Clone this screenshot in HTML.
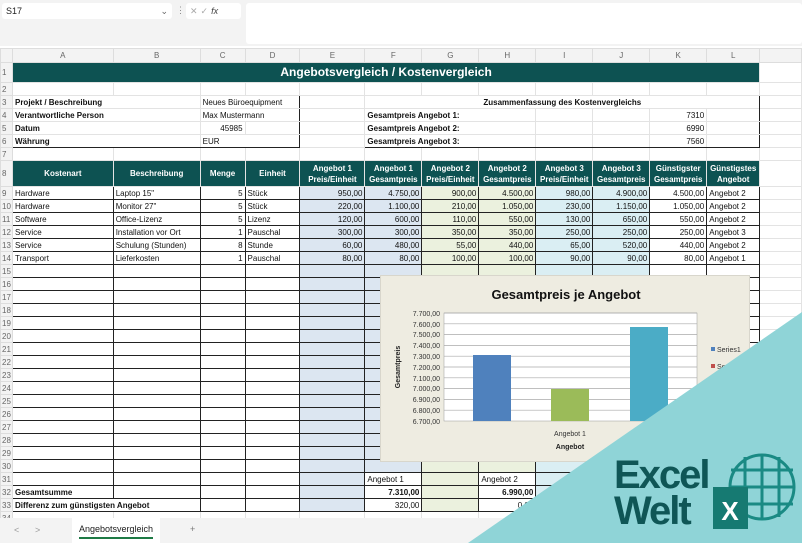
<!DOCTYPE html>
<html><head><meta charset="utf-8"><style>
*{margin:0;padding:0;box-sizing:border-box}
body{width:802px;height:543px;overflow:hidden;background:#fff;font-family:"Liberation Sans",sans-serif;position:relative}
.fb{position:absolute;left:0;top:0;width:802px;height:46px;background:#f3f3f3}
.nb{position:absolute;left:2px;top:3px;width:170px;height:16px;background:#fff;border-radius:3px;font-size:9px;padding:3px 4px;color:#222}
.fx{position:absolute;left:186px;top:3px;width:55px;height:16px;background:#fff;border-radius:3px;font-size:9px;color:#aaa;padding:3px 4px;letter-spacing:3px}
.fi{position:absolute;left:246px;top:3px;width:556px;height:41px;background:#fff;border-radius:3px}
table{position:absolute;left:0;top:48px;border-collapse:collapse;table-layout:fixed;font-size:8px;color:#111}
td{height:13px;border:1px solid #e3e3e3;white-space:nowrap;overflow:hidden;padding:0 2px;line-height:11px}
tr.ch td{height:14px;background:#f3f3f3;color:#666;text-align:center;border-color:#ddd}
td.rh{background:#f3f3f3;color:#666;text-align:left;padding:0 1px;font-size:8px;border-color:#ddd}
.t{background:#0d5252;color:#fff;font-weight:bold;text-align:center}
.r{text-align:right}.b{font-weight:bold}
.k td.x{border:1px solid #222}
.e{background:#dce6f1}.g{background:#ebf1de}.i{background:#daeef3}
.chart{position:absolute;left:380px;top:275px;width:370px;height:187px;background:#eeece1;border:1px solid #d8d6cc}
.tri{position:absolute;left:0;top:0;width:802px;height:543px}
.tabs{position:absolute;left:0;top:518px;width:802px;height:25px;background:#f3f3f3;font-size:9px;color:#999}
</style></head><body>
<div class="fb"><div class="nb">S17<span style="float:right;color:#666">⌄</span></div><span style="position:absolute;left:176px;top:5px;font-size:9px;color:#888">⋮</span><div class="fx">✕✓<i style="color:#444;letter-spacing:0">fx</i></div><div class="fi"></div></div>
<table>
<colgroup><col style="width:12px"><col style="width:101px"><col style="width:87px"><col style="width:45px"><col style="width:55px"><col style="width:65px"><col style="width:57px"><col style="width:57px"><col style="width:57px"><col style="width:57px"><col style="width:57px"><col style="width:57px"><col style="width:53px"><col style="width:42px"></colgroup>
<tr class="ch"><td></td><td>A</td><td>B</td><td>C</td><td>D</td><td>E</td><td>F</td><td>G</td><td>H</td><td>I</td><td>J</td><td>K</td><td>L</td><td></td></tr>
<tr><td class="rh" style="height:20px">1</td><td colspan="12" class="t" style="font-size:12px;height:20px">Angebotsvergleich / Kostenvergleich</td><td></td></tr>
<tr><td class="rh">2</td><td></td><td></td><td></td><td></td><td></td><td></td><td></td><td></td><td></td><td></td><td></td><td></td><td></td></tr>
<tr><td class="rh">3</td><td class="b" colspan="2" style="border-left:1px solid #222;border-top:1px solid #222">Projekt / Beschreibung</td><td colspan="2" style="border-top:1px solid #222;border-right:1px solid #222">Neues Büroequipment</td><td></td><td colspan="7" class="b" style="text-align:center;border:1px solid #222;border-bottom:none">Zusammenfassung des Kostenvergleichs</td><td></td></tr>
<tr><td class="rh">4</td><td class="b" colspan="2" style="border-left:1px solid #222">Verantwortliche Person</td><td colspan="2" style="border-right:1px solid #222">Max Mustermann</td><td></td><td colspan="3" class="b" style="border-left:1px solid #222">Gesamtpreis Angebot 1:</td><td></td><td></td><td class="r">7310</td><td style="border-right:1px solid #222"></td><td></td></tr>
<tr><td class="rh">5</td><td class="b" colspan="2" style="border-left:1px solid #222">Datum</td><td class="r">45985</td><td style="border-right:1px solid #222"></td><td></td><td colspan="3" class="b" style="border-left:1px solid #222">Gesamtpreis Angebot 2:</td><td></td><td></td><td class="r">6990</td><td style="border-right:1px solid #222"></td><td></td></tr>
<tr><td class="rh">6</td><td class="b" colspan="2" style="border-left:1px solid #222;border-bottom:1px solid #222">Währung</td><td colspan="2" style="border-bottom:1px solid #222;border-right:1px solid #222">EUR</td><td></td><td colspan="3" class="b" style="border-left:1px solid #222;border-bottom:1px solid #222">Gesamtpreis Angebot 3:</td><td style="border-bottom:1px solid #222"></td><td style="border-bottom:1px solid #222"></td><td class="r" style="border-bottom:1px solid #222">7560</td><td style="border-right:1px solid #222;border-bottom:1px solid #222"></td><td></td></tr>
<tr><td class="rh">7</td><td></td><td></td><td></td><td></td><td></td><td></td><td></td><td></td><td></td><td></td><td></td><td></td><td></td></tr>
<tr><td class="rh" style="height:26px">8</td><td class="t">Kostenart</td><td class="t">Beschreibung</td><td class="t">Menge</td><td class="t">Einheit</td><td class="t">Angebot 1<br>Preis/Einheit</td><td class="t">Angebot 1<br>Gesamtpreis</td><td class="t">Angebot 2<br>Preis/Einheit</td><td class="t">Angebot 2<br>Gesamtpreis</td><td class="t">Angebot 3<br>Preis/Einheit</td><td class="t">Angebot 3<br>Gesamtpreis</td><td class="t">Günstigster<br>Gesamtpreis</td><td class="t">Günstigstes<br>Angebot</td><td></td></tr>
<tr class="k"><td class="rh">9</td><td class="x">Hardware</td><td class="x">Laptop 15"</td><td class="x r">5</td><td class="x">Stück</td><td class="x r e">950,00</td><td class="x r e">4.750,00</td><td class="x r g">900,00</td><td class="x r g">4.500,00</td><td class="x r i">980,00</td><td class="x r i">4.900,00</td><td class="x r">4.500,00</td><td class="x">Angebot 2</td><td></td></tr>
<tr class="k"><td class="rh">10</td><td class="x">Hardware</td><td class="x">Monitor 27"</td><td class="x r">5</td><td class="x">Stück</td><td class="x r e">220,00</td><td class="x r e">1.100,00</td><td class="x r g">210,00</td><td class="x r g">1.050,00</td><td class="x r i">230,00</td><td class="x r i">1.150,00</td><td class="x r">1.050,00</td><td class="x">Angebot 2</td><td></td></tr>
<tr class="k"><td class="rh">11</td><td class="x">Software</td><td class="x">Office-Lizenz</td><td class="x r">5</td><td class="x">Lizenz</td><td class="x r e">120,00</td><td class="x r e">600,00</td><td class="x r g">110,00</td><td class="x r g">550,00</td><td class="x r i">130,00</td><td class="x r i">650,00</td><td class="x r">550,00</td><td class="x">Angebot 2</td><td></td></tr>
<tr class="k"><td class="rh">12</td><td class="x">Service</td><td class="x">Installation vor Ort</td><td class="x r">1</td><td class="x">Pauschal</td><td class="x r e">300,00</td><td class="x r e">300,00</td><td class="x r g">350,00</td><td class="x r g">350,00</td><td class="x r i">250,00</td><td class="x r i">250,00</td><td class="x r">250,00</td><td class="x">Angebot 3</td><td></td></tr>
<tr class="k"><td class="rh">13</td><td class="x">Service</td><td class="x">Schulung (Stunden)</td><td class="x r">8</td><td class="x">Stunde</td><td class="x r e">60,00</td><td class="x r e">480,00</td><td class="x r g">55,00</td><td class="x r g">440,00</td><td class="x r i">65,00</td><td class="x r i">520,00</td><td class="x r">440,00</td><td class="x">Angebot 2</td><td></td></tr>
<tr class="k"><td class="rh">14</td><td class="x">Transport</td><td class="x">Lieferkosten</td><td class="x r">1</td><td class="x">Pauschal</td><td class="x r e">80,00</td><td class="x r e">80,00</td><td class="x r g">100,00</td><td class="x r g">100,00</td><td class="x r i">90,00</td><td class="x r i">90,00</td><td class="x r">80,00</td><td class="x">Angebot 1</td><td></td></tr>
<tr class="k"><td class="rh">15</td><td class="x"></td><td class="x"></td><td class="x"></td><td class="x"></td><td class="x e"></td><td class="x e"></td><td class="x g"></td><td class="x g"></td><td class="x i"></td><td class="x i"></td><td class="x"></td><td class="x"></td><td></td></tr>
<tr class="k"><td class="rh">16</td><td class="x"></td><td class="x"></td><td class="x"></td><td class="x"></td><td class="x e"></td><td class="x e"></td><td class="x g"></td><td class="x g"></td><td class="x i"></td><td class="x i"></td><td class="x"></td><td class="x"></td><td></td></tr>
<tr class="k"><td class="rh">17</td><td class="x"></td><td class="x"></td><td class="x"></td><td class="x"></td><td class="x e"></td><td class="x e"></td><td class="x g"></td><td class="x g"></td><td class="x i"></td><td class="x i"></td><td class="x"></td><td class="x"></td><td></td></tr>
<tr class="k"><td class="rh">18</td><td class="x"></td><td class="x"></td><td class="x"></td><td class="x"></td><td class="x e"></td><td class="x e"></td><td class="x g"></td><td class="x g"></td><td class="x i"></td><td class="x i"></td><td class="x"></td><td class="x"></td><td></td></tr>
<tr class="k"><td class="rh">19</td><td class="x"></td><td class="x"></td><td class="x"></td><td class="x"></td><td class="x e"></td><td class="x e"></td><td class="x g"></td><td class="x g"></td><td class="x i"></td><td class="x i"></td><td class="x"></td><td class="x"></td><td></td></tr>
<tr class="k"><td class="rh">20</td><td class="x"></td><td class="x"></td><td class="x"></td><td class="x"></td><td class="x e"></td><td class="x e"></td><td class="x g"></td><td class="x g"></td><td class="x i"></td><td class="x i"></td><td class="x"></td><td class="x"></td><td></td></tr>
<tr class="k"><td class="rh">21</td><td class="x"></td><td class="x"></td><td class="x"></td><td class="x"></td><td class="x e"></td><td class="x e"></td><td class="x g"></td><td class="x g"></td><td class="x i"></td><td class="x i"></td><td class="x"></td><td class="x"></td><td></td></tr>
<tr class="k"><td class="rh">22</td><td class="x"></td><td class="x"></td><td class="x"></td><td class="x"></td><td class="x e"></td><td class="x e"></td><td class="x g"></td><td class="x g"></td><td class="x i"></td><td class="x i"></td><td class="x"></td><td class="x"></td><td></td></tr>
<tr class="k"><td class="rh">23</td><td class="x"></td><td class="x"></td><td class="x"></td><td class="x"></td><td class="x e"></td><td class="x e"></td><td class="x g"></td><td class="x g"></td><td class="x i"></td><td class="x i"></td><td class="x"></td><td class="x"></td><td></td></tr>
<tr class="k"><td class="rh">24</td><td class="x"></td><td class="x"></td><td class="x"></td><td class="x"></td><td class="x e"></td><td class="x e"></td><td class="x g"></td><td class="x g"></td><td class="x i"></td><td class="x i"></td><td class="x"></td><td class="x"></td><td></td></tr>
<tr class="k"><td class="rh">25</td><td class="x"></td><td class="x"></td><td class="x"></td><td class="x"></td><td class="x e"></td><td class="x e"></td><td class="x g"></td><td class="x g"></td><td class="x i"></td><td class="x i"></td><td class="x"></td><td class="x"></td><td></td></tr>
<tr class="k"><td class="rh">26</td><td class="x"></td><td class="x"></td><td class="x"></td><td class="x"></td><td class="x e"></td><td class="x e"></td><td class="x g"></td><td class="x g"></td><td class="x i"></td><td class="x i"></td><td class="x"></td><td class="x"></td><td></td></tr>
<tr class="k"><td class="rh">27</td><td class="x"></td><td class="x"></td><td class="x"></td><td class="x"></td><td class="x e"></td><td class="x e"></td><td class="x g"></td><td class="x g"></td><td class="x i"></td><td class="x i"></td><td class="x"></td><td class="x"></td><td></td></tr>
<tr class="k"><td class="rh">28</td><td class="x"></td><td class="x"></td><td class="x"></td><td class="x"></td><td class="x e"></td><td class="x e"></td><td class="x g"></td><td class="x g"></td><td class="x i"></td><td class="x i"></td><td class="x"></td><td class="x"></td><td></td></tr>
<tr class="k"><td class="rh">29</td><td class="x"></td><td class="x"></td><td class="x"></td><td class="x"></td><td class="x e"></td><td class="x e"></td><td class="x g"></td><td class="x g"></td><td class="x i"></td><td class="x i"></td><td class="x"></td><td class="x"></td><td></td></tr>
<tr class="k"><td class="rh">30</td><td class="x"></td><td class="x"></td><td class="x"></td><td class="x"></td><td class="x e"></td><td class="x e"></td><td class="x g"></td><td class="x g"></td><td class="x i"></td><td class="x i"></td><td class="x"></td><td class="x"></td><td></td></tr>
<tr class="k"><td class="rh">31</td><td class="x"></td><td class="x"></td><td class="x"></td><td class="x"></td><td class="x e"></td><td class="x">Angebot 1</td><td class="x g"></td><td class="x">Angebot 2</td><td class="x i"></td><td class="x"></td><td class="x"></td><td class="x"></td><td></td></tr>
<tr class="k"><td class="rh">32</td><td class="x b">Gesamtsumme</td><td class="x"></td><td class="x"></td><td class="x"></td><td class="x e"></td><td class="x r b">7.310,00</td><td class="x g"></td><td class="x r b">6.990,00</td><td class="x i"></td><td class="x"></td><td class="x"></td><td class="x"></td><td></td></tr>
<tr class="k"><td class="rh">33</td><td class="x b" colspan="2">Differenz zum günstigsten Angebot</td><td class="x"></td><td class="x"></td><td class="x e"></td><td class="x r">320,00</td><td class="x g"></td><td class="x r">0,00</td><td class="x i"></td><td class="x"></td><td class="x"></td><td class="x"></td><td></td></tr>
<tr><td class="rh">34</td><td></td><td></td><td></td><td></td><td></td><td></td><td></td><td></td><td></td><td></td><td></td><td></td><td></td></tr>
</table>
<div class="chart">
<svg width="370" height="187" style="position:absolute;left:0;top:0" font-family="Liberation Sans, sans-serif">
<text x="185" y="23" text-anchor="middle" font-size="13" font-weight="bold" fill="#111">Gesamtpreis je Angebot</text>
<rect x="63" y="37" width="253" height="108" fill="#fff" stroke="#999" stroke-width="0.5"/>
<g stroke="#aaa" stroke-width="0.7">
<line x1="63" x2="316" y1="37" y2="37"/><line x1="63" x2="316" y1="47.8" y2="47.8"/><line x1="63" x2="316" y1="58.6" y2="58.6"/><line x1="63" x2="316" y1="69.4" y2="69.4"/><line x1="63" x2="316" y1="80.2" y2="80.2"/><line x1="63" x2="316" y1="91" y2="91"/><line x1="63" x2="316" y1="101.8" y2="101.8"/><line x1="63" x2="316" y1="112.6" y2="112.6"/><line x1="63" x2="316" y1="123.4" y2="123.4"/><line x1="63" x2="316" y1="134.2" y2="134.2"/></g>
<g font-size="7" fill="#333" text-anchor="end">
<text x="59" y="40">7.700,00</text><text x="59" y="51">7.600,00</text><text x="59" y="61">7.500,00</text><text x="59" y="72">7.400,00</text><text x="59" y="83">7.300,00</text><text x="59" y="94">7.200,00</text><text x="59" y="105">7.100,00</text><text x="59" y="115">7.000,00</text><text x="59" y="126">6.900,00</text><text x="59" y="137">6.800,00</text><text x="59" y="148">6.700,00</text></g>
<text transform="translate(19,91) rotate(-90)" text-anchor="middle" font-size="7" font-weight="bold" fill="#222">Gesamtpreis</text>
<rect x="92" y="79" width="38" height="66" fill="#4f81bd"/>
<rect x="170" y="113" width="38" height="32" fill="#9bbb59"/>
<rect x="249" y="51" width="38" height="94" fill="#4bacc6"/>
<text x="189" y="160" text-anchor="middle" font-size="7" fill="#333">Angebot 1</text>
<text x="189" y="173" text-anchor="middle" font-size="7" font-weight="bold" fill="#222">Angebot</text>
<rect x="330" y="71" width="4" height="4" fill="#4f81bd"/><text x="336" y="76" font-size="7" fill="#333">Series1</text>
<rect x="330" y="88" width="4" height="4" fill="#c0504d"/><text x="336" y="93" font-size="7" fill="#333">Series2</text>
</svg></div>
<div class="tabs">
<span style="position:absolute;left:14px;top:7px">&lt;</span><span style="position:absolute;left:35px;top:7px">&gt;</span>
<div style="position:absolute;left:72px;top:0;width:88px;height:25px;background:#fff;color:#222;text-align:center;padding-top:6px">Angebotsvergleich<div style="width:74px;height:2px;background:#1e7a45;margin:3px auto 0"></div></div>
<span style="position:absolute;left:190px;top:6px;color:#777">+</span></div>
<svg class="tri" viewBox="0 0 802 543">
<polygon points="802,312 802,543 468,543" fill="#8fd4d7"/>
<g fill="none" stroke="#1a8a84" stroke-width="3">
<circle cx="762" cy="487" r="32"/>
<line x1="731" y1="470" x2="793" y2="470"/><line x1="730" y1="487" x2="794" y2="487"/><line x1="731" y1="504" x2="793" y2="504"/>
<line x1="745" y1="457" x2="745" y2="517"/><line x1="762" y1="455" x2="762" y2="519"/><line x1="779" y1="457" x2="779" y2="517"/>
</g>
<rect x="713" y="487" width="35" height="42" fill="#167a72"/>
<text x="730" y="520" text-anchor="middle" font-family="Liberation Sans, sans-serif" font-weight="bold" font-size="26" fill="#fff">X</text>
<text x="614" y="488" font-family="Liberation Sans, sans-serif" font-weight="bold" font-size="40" fill="#0f5656" letter-spacing="-2">Excel</text>
<text x="614" y="524" font-family="Liberation Sans, sans-serif" font-weight="bold" font-size="40" fill="#0f5656" letter-spacing="-2">Welt</text>
</svg>
</body></html>
